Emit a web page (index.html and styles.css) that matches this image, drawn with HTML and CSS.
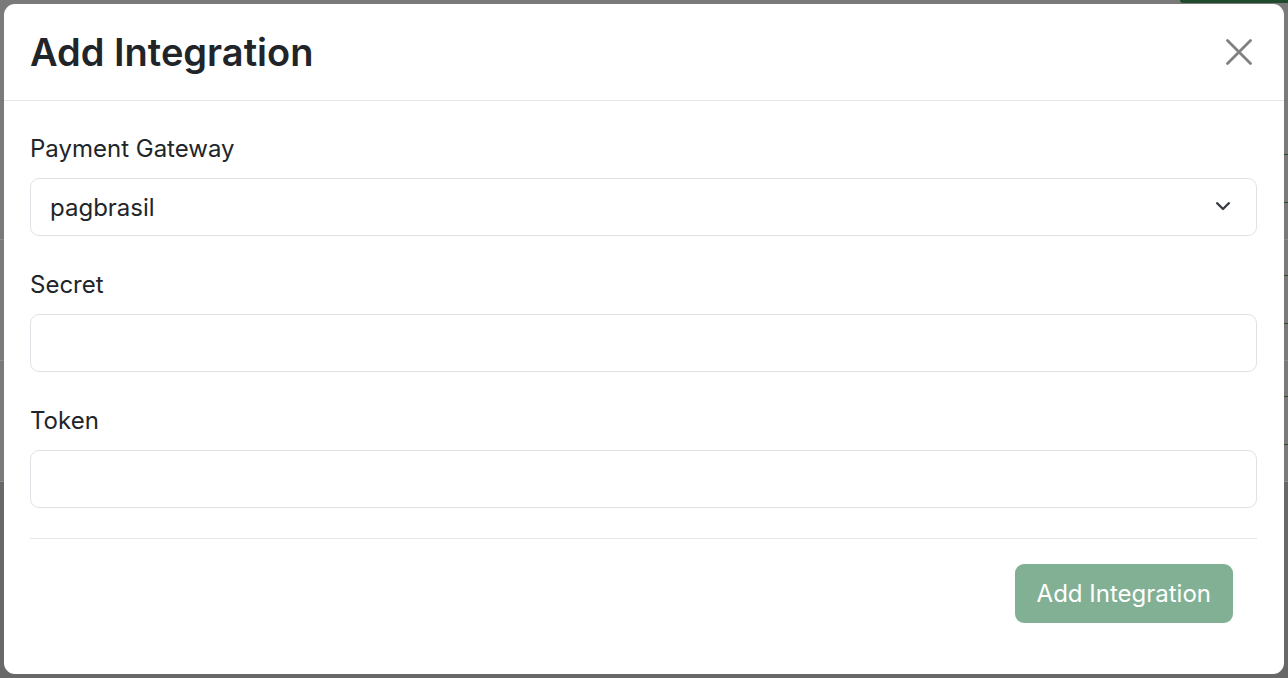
FILE: index.html
```html
<!DOCTYPE html>
<html lang="en">
<head>
<meta charset="utf-8">
<title>Add Integration</title>
<link rel="stylesheet" href="styles.css">
</head>
<body>
<div class="page">
  <header class="topbar"><span></span><span class="top-btn"></span></header>
  <section class="table">
    <div class="row"><span></span><span class="row-btn"></span></div>
    <div class="row"><span></span><span class="row-btn"></span></div>
    <div class="row"><span></span><span class="row-btn"></span></div>
  </section>
  <section class="lower"></section>
</div>

<div class="modal" role="dialog" aria-labelledby="modal-title">
  <div class="modal-header">
    <h1 class="modal-title" id="modal-title">Add Integration</h1>
    <button class="close-btn" type="button" aria-label="Close">
      <svg width="26" height="26" viewBox="0 0 26 26"><path d="M1.5 1.5 L24.5 24.5 M24.5 1.5 L1.5 24.5" stroke="#808080" stroke-width="2.8" stroke-linecap="round" fill="none"/></svg>
    </button>
  </div>
  <form class="modal-body">
    <div class="field">
      <label class="label" for="gateway">Payment Gateway</label>
      <div class="select-wrap">
        <select class="control select" id="gateway">
          <option>pagbrasil</option>
        </select>
        <svg class="chevron" width="14" height="9" viewBox="0 0 14 9"><path d="M1.2 1.2 L7 7 L12.8 1.2" stroke="#343a40" stroke-width="2.3" fill="none" stroke-linecap="round" stroke-linejoin="round"/></svg>
      </div>
    </div>
    <div class="field">
      <label class="label" for="secret">Secret</label>
      <input class="control" id="secret" type="text">
    </div>
    <div class="field">
      <label class="label" for="token">Token</label>
      <input class="control" id="token" type="text">
    </div>
    <hr class="divider">
    <div class="footer">
      <button class="submit" type="button">Add Integration</button>
    </div>
  </form>
</div>
</body>
</html>
```

FILE: styles.css
```css
* { box-sizing: border-box; }

html, body {
  margin: 0;
  height: 678px;
  overflow: hidden;
}

body {
  background: #7a7a7a;
  font-family: Inter, "Liberation Sans", sans-serif;
  color: #212529;
}

/* dimmed page behind the modal */
.page {
  display: flex;
  flex-direction: column;
  height: 678px;
}

.topbar {
  display: grid;
  grid-template-columns: 1180px 1fr;
  height: 119px;
}

.top-btn {
  height: 3px;
  background: #1f4a2d;
  border-bottom-left-radius: 4px;
}

.row {
  display: grid;
  grid-template-columns: 1270px 1fr;
  align-items: start;
  height: 121px;
  padding-top: 35px;
  border-bottom: 1px solid #8a8a8a;
}

.row-btn {
  height: 49px;
  width: 120px;
  border: 1px solid #2c4d34;
}

.lower {
  flex: 1;
  background: #686868;
}

/* modal */
.modal {
  position: absolute;
  top: 4px;
  left: 4px;
  width: 1280px;
  height: 670px;
  background: #ffffff;
  border-radius: 11px;
  overflow: hidden;
}

.modal-header {
  display: flex;
  align-items: center;
  justify-content: space-between;
  padding: 24px 27px 24px 26px;
  border-bottom: 1px solid #e6e6e6;
}

.modal-title {
  margin: 0;
  font-size: 38px;
  line-height: 48px;
  font-weight: 600;
  color: #212529;
}

.close-btn {
  width: 36px;
  height: 36px;
  padding: 0;
  border: none;
  background: transparent;
  display: flex;
  align-items: center;
  justify-content: center;
}

.modal-body {
  padding: 29px 27px 52px 26px;
  margin: 0;
}

.field {
  margin-bottom: 30px;
}

.field:last-of-type {
  margin-bottom: 0;
}

.label {
  display: block;
  font-size: 24px;
  line-height: 38px;
  margin-bottom: 10px;
  color: #212529;
}

.control {
  display: block;
  width: 100%;
  height: 58px;
  padding: 0 19px;
  border: 1px solid #dee2e6;
  border-radius: 9px;
  background: #ffffff;
  font-family: Inter, "Liberation Sans", sans-serif;
  font-size: 24px;
  color: #212529;
  outline: none;
}

.select-wrap {
  position: relative;
}

.select {
  appearance: none;
  -webkit-appearance: none;
}

.chevron {
  position: absolute;
  right: 27px;
  top: 24px;
  pointer-events: none;
}

.divider {
  margin: 28px 0 25px;
  border: none;
  border-top: 1px solid #e6e6e6;
  height: 0;
}

.footer {
  display: flex;
  justify-content: flex-end;
  padding-right: 24px;
}

.submit {
  height: 59px;
  padding: 0 22px;
  border: none;
  border-radius: 9px;
  background: #82b095;
  color: #ffffff;
  font-family: Inter, "Liberation Sans", sans-serif;
  font-size: 24px;
  font-weight: 400;
}
```
